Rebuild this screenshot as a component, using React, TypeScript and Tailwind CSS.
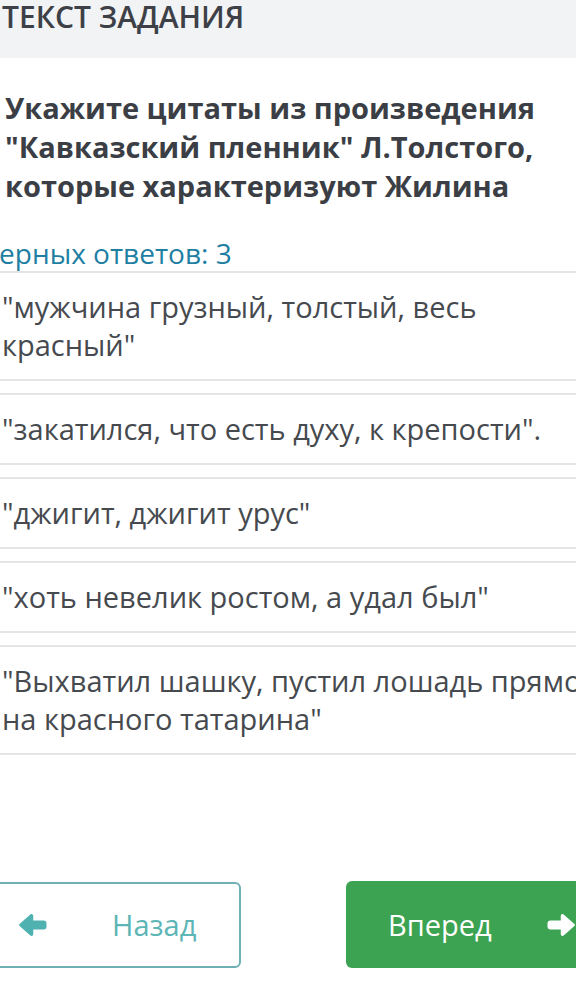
import React from "react";

const options = [
  '"мужчина грузный, толстый, весь красный"',
  '"закатился, что есть духу, к крепости".',
  '"джигит, джигит урус"',
  '"хоть невелик ростом, а удал был"',
  '"Выхватил шашку, пустил лошадь прямо на красного татарина"',
];

function Arrow({ dir, color }: { dir: "left" | "right"; color: string }) {
  return (
    <svg
      width="28"
      height="22"
      viewBox="0 0 28 22"
      style={{ transform: dir === "right" ? "scaleX(-1)" : undefined }}
    >
      <path
        d="M2 11 L12.5 1.8 L12.5 20.2 Z"
        fill={color}
        stroke={color}
        strokeWidth="3.5"
        strokeLinejoin="round"
      />
      <rect x="10" y="6.5" width="17.5" height="9" rx="3" fill={color} />
    </svg>
  );
}

export default function App() {
  return (
    <div
      className="w-[576px] h-[1004px] overflow-hidden bg-white"
      style={{ fontFamily: '"Open Sans", "Noto Sans", sans-serif' }}
    >
      <div className="h-[58px] bg-[#f2f3f5] pl-[2px]">
        <div className="text-[30px] leading-[34px] font-semibold text-[#3d4147]">
          ТЕКСТ ЗАДАНИЯ
        </div>
      </div>

      <div className="pt-[30px] pl-[5px] pr-[10px]">
        <div className="text-[29px] leading-[39px] font-bold text-[#3b3f45]">
          Укажите цитаты из произведения "Кавказский пленник" Л.Толстого,
          которые характеризуют Жилина
        </div>
      </div>

      <div className="mt-[30px] ml-[-19px] whitespace-nowrap text-[28px] leading-[36px] text-[#1f7fa3]">
        Верных ответов: 3
      </div>

      <div className="flex flex-col gap-[12px]">
        {options.map((o, i) => (
          <div
            key={i}
            className="w-[680px] border-y-2 border-[#e4e5e6] py-[15px] pl-[2px] pr-[60px]"
          >
            <div className={i === 0 ? "w-[520px] text-[29px] leading-[38px] text-[#464a4f]" : "text-[29px] leading-[38px] text-[#464a4f]"}>
              {o}
            </div>
          </div>
        ))}
      </div>

      <div className="mt-[126px] flex items-center">
        <div className="ml-[-12px] w-[253px] h-[86px] shrink-0 rounded-[6px] border-2 border-[#6fb0b5] flex items-center">
          <div className="ml-[29px] flex">
            <Arrow dir="left" color="#4fb1b0" />
          </div>
          <span className="ml-[65px] text-[29px] text-[#5db5b6]">Назад</span>
        </div>
        <div className="ml-[105px] w-[260px] h-[87px] shrink-0 rounded-[6px] bg-[#3ba351] flex items-center">
          <span className="ml-[42px] text-[29px] text-white">Вперед</span>
          <div className="ml-[55px] flex">
            <Arrow dir="right" color="#ffffff" />
          </div>
        </div>
      </div>
    </div>
  );
}
